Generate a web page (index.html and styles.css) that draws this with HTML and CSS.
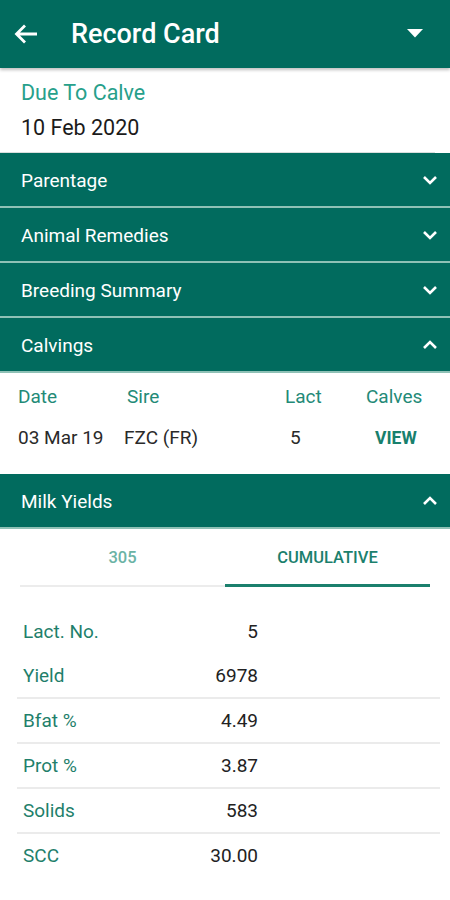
FILE: index.html
```html
<!DOCTYPE html>
<html lang="en">
<head>
  <meta charset="UTF-8" />
  <meta name="viewport" content="width=device-width, initial-scale=1.0"/>
  <title>Record Card</title>
  <link rel="stylesheet" href="styles.css">
</head>
<body>
  <!-- Top bar -->
  <div class="appbar">
    <svg class="back" width="24" height="20" viewBox="0 0 24 20"><path d="M23 10H2.5M11 1.5L2.5 10 11 18.5" fill="none" stroke="#fff" stroke-width="2.8"/></svg>
    <div class="title">Record Card</div>
    <svg class="drop" width="16" height="9" viewBox="0 0 16 9"><path d="M0 0h16L8 8.5z" fill="#fff"/></svg>
  </div>

  <div class="due">
    <div class="due-label">Due To Calve</div>
    <div class="due-value">10 Feb 2020</div>
  </div>

  <!-- Sections -->
  <div class="section-head">
    <span>Parentage</span>
    <svg class="chev" width="16" height="10" viewBox="0 0 16 10"><path d="M2 2l6 6 6-6" fill="none" stroke="#fff" stroke-width="2.6"/></svg>
  </div>
  <div class="section-head">
    <span>Animal Remedies</span>
    <svg class="chev" width="16" height="10" viewBox="0 0 16 10"><path d="M2 2l6 6 6-6" fill="none" stroke="#fff" stroke-width="2.6"/></svg>
  </div>
  <div class="section-head">
    <span>Breeding Summary</span>
    <svg class="chev" width="16" height="10" viewBox="0 0 16 10"><path d="M2 2l6 6 6-6" fill="none" stroke="#fff" stroke-width="2.6"/></svg>
  </div>
  <div class="section-head">
    <span>Calvings</span>
    <svg class="chev" width="16" height="10" viewBox="0 0 16 10"><path d="M2 8l6-6 6 6" fill="none" stroke="#fff" stroke-width="2.6"/></svg>
  </div>

  <div class="calvings">
    <div class="calv-row calv-head">
      <span class="c-date">Date</span>
      <span class="c-sire">Sire</span>
      <span class="c-lact">Lact</span>
      <span class="c-calves">Calves</span>
    </div>
    <div class="calv-row">
      <span class="c-date">03 Mar 19</span>
      <span class="c-sire">FZC (FR)</span>
      <span class="c-lact val">5</span>
      <span class="c-calves view">VIEW</span>
    </div>
  </div>

  <div class="section-head">
    <span>Milk Yields</span>
    <svg class="chev" width="16" height="10" viewBox="0 0 16 10"><path d="M2 8l6-6 6 6" fill="none" stroke="#fff" stroke-width="2.6"/></svg>
  </div>

  <div class="tabs">
    <div class="tab">305</div>
    <div class="tab active">CUMULATIVE</div>
  </div>

  <div class="yields">
    <div class="y-row"><span class="y-label">Lact. No.</span><span class="y-val">5</span></div>
    <div class="y-row"><span class="y-label">Yield</span><span class="y-val">6978</span></div>
    <div class="y-row line"><span class="y-label">Bfat %</span><span class="y-val">4.49</span></div>
    <div class="y-row line"><span class="y-label">Prot %</span><span class="y-val">3.87</span></div>
    <div class="y-row line"><span class="y-label">Solids</span><span class="y-val">583</span></div>
    <div class="y-row line"><span class="y-label">SCC</span><span class="y-val">30.00</span></div>
  </div>
</body>
</html>
```

FILE: styles.css
```css
body {
  margin: 0;
  font-family: Roboto, "Liberation Sans", sans-serif;
  background: #fff;
  color: #212121;
}
.appbar {
  height: 68px;
  background: #016b5e;
  display: flex;
  align-items: center;
  padding-left: 14px;
  padding-right: 27px;
  box-shadow: 0 2px 3px rgba(0, 0, 0, 0.25);
  position: relative;
}
.back {
  margin-right: 33px;
}
.title {
  color: #fff;
  font-size: 27px;
  font-weight: 500;
  flex: 1;
}
.drop {
  margin-top: -2px;
}
.due {
  padding: 7px 21px 6px;
  height: 71px;
  border-bottom: 1px solid #d9dedd;
  margin: 0 15px 0 0;
}
.due-label {
  color: #27a08b;
  font-size: 21.5px;
  line-height: 35px;
}
.due-value {
  font-size: 21.5px;
  line-height: 35px;
  color: #1b1b1b;
}
.section-head {
  height: 53px;
  background: #016b5e;
  border-bottom: 2px solid #8fc1b6;
  display: flex;
  align-items: center;
  justify-content: space-between;
  padding: 0 12px 0 21px;
  color: #fff;
  font-size: 19px;
}
.section-head span {
  padding-top: 2px;
}
.calvings {
  padding: 3px 0 16px;
}
.calv-row {
  display: flex;
  align-items: center;
  height: 41px;
  font-size: 19px;
  color: #2a2a2a;
}
.calv-head {
  color: #238a77;
}
.c-date {
  width: 106px;
  padding-left: 18px;
}
.c-sire {
  width: 161px;
}
.calv-head .c-sire {
  padding-left: 3px;
  width: 158px;
}
.c-lact {
  width: 81px;
}
.c-lact.val {
  padding-left: 5px;
  width: 76px;
}
.view {
  color: #18806d;
  font-weight: 700;
  font-size: 17.5px;
  padding-left: 9px;
}
.tabs {
  display: flex;
  margin: 0 20px;
  height: 58px;
}
.tab {
  flex: 1;
  display: flex;
  align-items: center;
  justify-content: center;
  font-size: 16.5px;
  font-weight: 500;
  color: #6bb3a5;
  border-bottom: 2px solid #ececec;
}
.tab.active {
  color: #1b806d;
  border-bottom: 3px solid #1b806d;
  padding-top: 1px;
}
.yields {
  margin: 22px 10px 0 17px;
}
.y-row {
  display: flex;
  align-items: center;
  height: 44px;
  font-size: 19px;
}
.y-row.line {
  height: 43px;
  border-top: 2px solid #ebebeb;
}
.y-label {
  width: 175px;
  padding-left: 6px;
  color: #1f7f6b;
}
.y-val {
  width: 60px;
  text-align: right;
  color: #222;
}
```
